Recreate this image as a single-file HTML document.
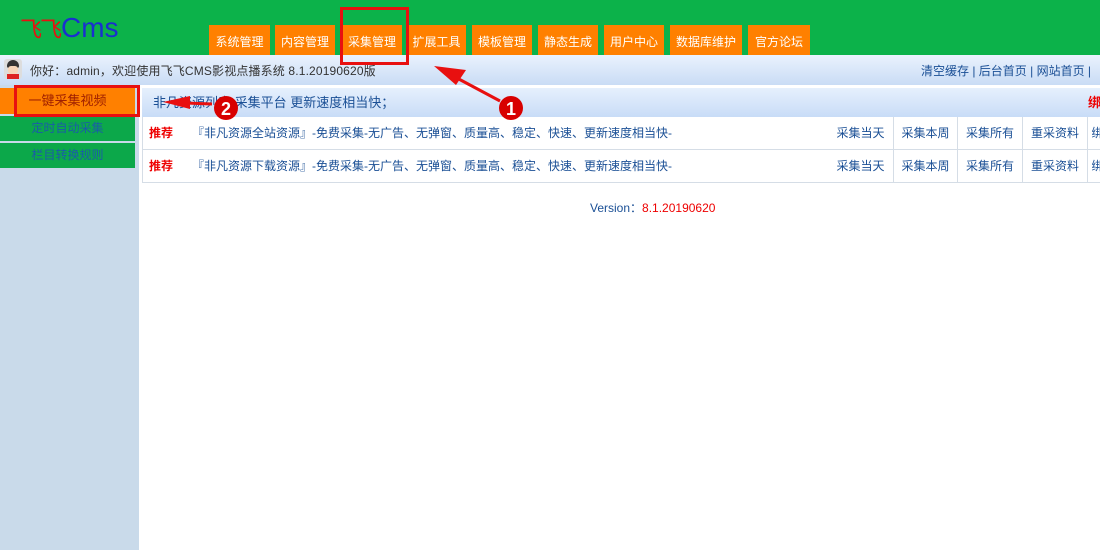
<!DOCTYPE html>
<html><head><meta charset="utf-8"><style>
*{margin:0;padding:0;box-sizing:border-box}
body{width:1100px;height:550px;overflow:hidden;background:#fff;font-family:"Liberation Sans","Noto Sans CJK SC",sans-serif;font-size:12px;position:relative}
.hd{position:absolute;left:0;top:0;width:1100px;height:55px;background:#0cb24a}
.logo{position:absolute;left:20px;top:12px;font-size:28px;color:#1a2fd0;font-family:"Liberation Sans",sans-serif;white-space:nowrap}
.logo b{color:#e81010;font-weight:normal;font-family:"Noto Sans CJK SC",sans-serif;font-size:22px;letter-spacing:-2px;margin-right:1px}
.tab{position:absolute;top:25px;height:30px;background:#ff8000;color:#fff;font-size:12px;line-height:34px;text-align:center}
.bar{position:absolute;left:0;top:55px;width:1100px;height:30px;background:linear-gradient(#eaf2fd,#c9dcf5);color:#333;line-height:32px}
.side{position:absolute;left:0;top:85px;width:139px;height:465px;background:#c9daea}
.si{position:absolute;left:0;width:135px;height:25px;line-height:25px;text-align:center;color:#1a5ca8;background:#0ca84a}
.ch{position:absolute;left:142px;top:88px;width:958px;height:29px;background:linear-gradient(#e6f0fd,#c8dcf7);color:#1a4f95;line-height:30px;padding-left:11px;font-size:13px}
.row{position:absolute;left:142px;width:958px;height:33px;border-bottom:1px solid #d5dde6;border-left:1px solid #d5dde6;line-height:32px;color:#1a4f95}
.row .r{position:absolute;left:6px;color:#e00;font-weight:bold}
.row .t{position:absolute;left:49px}
.c{position:absolute;top:0;height:32px;border-left:1px solid #d5dde6;text-align:center}
</style></head><body>
<div class="hd"><div class="logo"><b>飞飞</b>Cms</div></div>
<div class="tab" style="left:209px;width:61px">系统管理</div>
<div class="tab" style="left:275px;width:60px">内容管理</div>
<div class="tab" style="left:342px;width:60px">采集管理</div>
<div class="tab" style="left:407px;width:59px">扩展工具</div>
<div class="tab" style="left:472px;width:60px">模板管理</div>
<div class="tab" style="left:538px;width:60px">静态生成</div>
<div class="tab" style="left:604px;width:60px">用户中心</div>
<div class="tab" style="left:670px;width:72px">数据库维护</div>
<div class="tab" style="left:748px;width:62px">官方论坛</div>
<div class="bar"><span style="position:absolute;left:4px;top:4px;width:18px;height:20px;background:#ddd;border-radius:3px"><span style="position:absolute;left:3px;top:1px;width:12px;height:8px;background:#333;border-radius:6px 6px 2px 2px"></span><span style="position:absolute;left:4px;top:7px;width:10px;height:8px;background:#f6d5b8;border-radius:3px"></span><span style="position:absolute;left:3px;top:15px;width:12px;height:5px;background:#d22"></span></span><span style="position:absolute;left:30px;letter-spacing:0.15px">你好：admin，欢迎使用飞飞CMS影视点播系统 8.1.20190620版</span><span style="position:absolute;left:921px;color:#1a4f95">清空缓存 | 后台首页 | 网站首页 | 溢</span></div>
<div class="side">
<div class="si" style="top:3px;height:26px;background:#ff8000;color:#a02000;font-size:13px">一键采集视频</div>
<div class="si" style="top:31px">定时自动采集</div>
<div class="si" style="top:58px">栏目转换规则</div>
</div>
<div class="ch">非凡资源列表 采集平台 更新速度相当快；<span style="position:absolute;left:946px;color:#e00;font-weight:bold">绑</span></div>
<div class="row" style="top:117px"><span class="r">推荐</span><span class="t">『非凡资源全站资源』-免费采集-无广告、无弹窗、质量高、稳定、快速、更新速度相当快-</span>
<span class="c" style="left:685px;width:65px;border:0">采集当天</span><span class="c" style="left:750px;width:64px">采集本周</span><span class="c" style="left:814px;width:65px">采集所有</span><span class="c" style="left:879px;width:65px">重采资料</span><span class="c" style="left:944px;width:20px">绑</span></div>
<div class="row" style="top:150px"><span class="r">推荐</span><span class="t">『非凡资源下载资源』-免费采集-无广告、无弹窗、质量高、稳定、快速、更新速度相当快-</span>
<span class="c" style="left:685px;width:65px;border:0">采集当天</span><span class="c" style="left:750px;width:64px">采集本周</span><span class="c" style="left:814px;width:65px">采集所有</span><span class="c" style="left:879px;width:65px">重采资料</span><span class="c" style="left:944px;width:20px">绑</span></div>
<div style="position:absolute;left:590px;top:199px;color:#1a4f95">Version：<span style="color:#e00">8.1.20190620</span></div>
<div style="position:absolute;left:340px;top:7px;width:69px;height:58px;border:3px solid #e81010"></div>
<div style="position:absolute;left:14px;top:85px;width:126px;height:32px;border:3px solid #e81010"></div>
<svg style="position:absolute;left:0;top:0" width="1100" height="550">
<line x1="500" y1="101" x2="455" y2="77" stroke="#e81010" stroke-width="3"/>
<polygon points="434,66 466,70 456,85" fill="#e81010"/>
<circle cx="511" cy="108" r="12" fill="#d80000"/>
<text x="511" y="115" fill="#fff" font-size="18" font-weight="bold" text-anchor="middle" font-family="Liberation Sans">1</text>
<line x1="212" y1="104" x2="185" y2="103" stroke="#e81010" stroke-width="3"/>
<polygon points="163,102 190,96 190,109" fill="#e81010"/>
<circle cx="226" cy="108" r="12" fill="#d80000"/>
<text x="226" y="115" fill="#fff" font-size="18" font-weight="bold" text-anchor="middle" font-family="Liberation Sans">2</text>
</svg>
</body></html>
